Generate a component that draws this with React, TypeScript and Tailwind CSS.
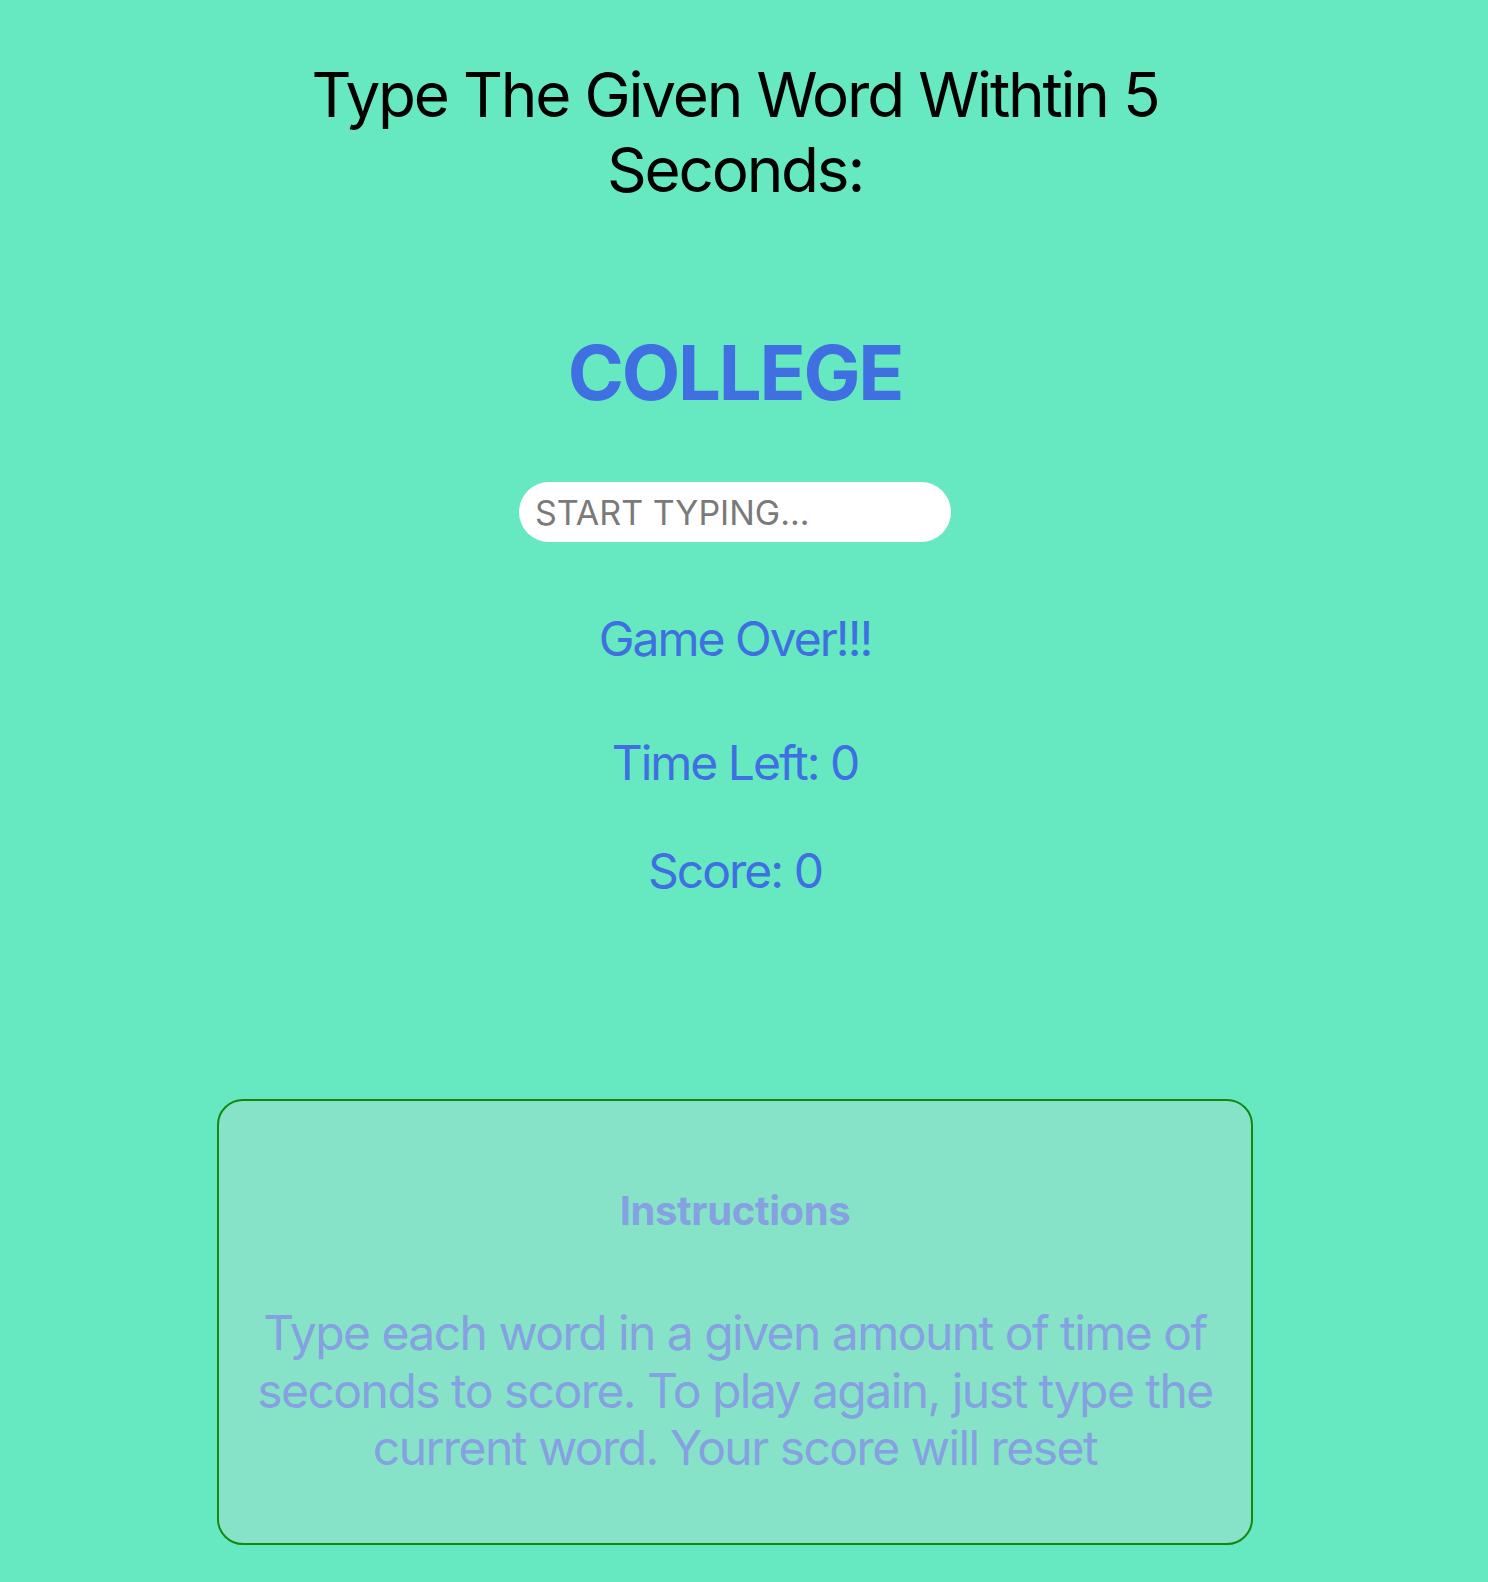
import React, { useState } from "react";

export default function App() {
  const [text, setText] = useState("");

  return (
    <div className="min-h-screen bg-[#66e9c0] flex flex-col items-center pr-[18px] font-['Inter','Liberation_Sans',sans-serif]">
      <h1 className="mt-[57px] w-[880px] text-center text-[62px] leading-[75px] text-black tracking-[-2.2px]">
        Type The Given Word Withtin 5 Seconds:
      </h1>

      <h2 className="mt-[127px] text-[76px] leading-none font-bold text-[#3f6fe0] tracking-[-2.2px]">
        COLLEGE
      </h2>

      <input
        type="text"
        autoFocus
        value={text}
        onChange={(e) => setText(e.target.value)}
        placeholder="START TYPING..."
        className="mt-[72px] w-[432px] h-[60px] rounded-full bg-white px-[16px] text-[34px] text-black placeholder:text-[#7a7a7a] outline-none caret-black"
      />

      <p className="mt-[73px] text-[48px] leading-none text-[#3f6fe0] tracking-[-2px]">Game Over!!!</p>
      <p className="mt-[76px] text-[48px] leading-none text-[#3f6fe0] tracking-[-2px]">Time Left: 0</p>
      <p className="mt-[60px] text-[48px] leading-none text-[#3f6fe0] tracking-[-2px]">Score: 0</p>

      <div className="mt-[204px] mb-[36px] w-[1036px] h-[446px] rounded-[26px] border-2 border-[#128a12] bg-[#87e3c7] flex flex-col items-center px-[24px] pt-[90px]">
        <h3 className="text-[40px] leading-none font-bold text-[#85a1e1] tracking-[-0.4px]">Instructions</h3>
        <p className="mt-[73px] text-center text-[48px] leading-[57.5px] text-[#85a1e1] tracking-[-1.55px]">
          Type each word in a given amount of time of seconds to score. To play again, just type the current word. Your score will reset
        </p>
      </div>
    </div>
  );
}
